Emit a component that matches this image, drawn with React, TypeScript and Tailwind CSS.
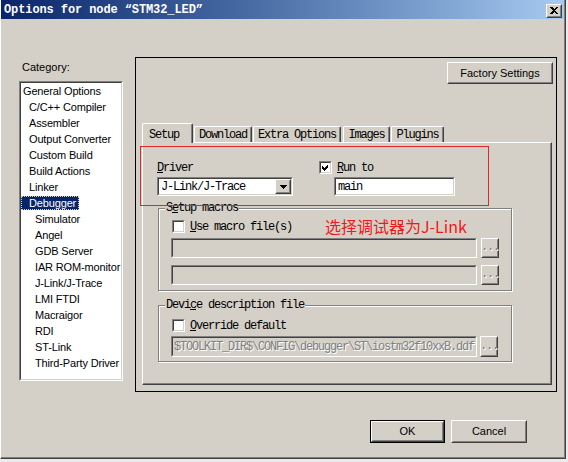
import React from "react";

const mono = "font-['Liberation_Mono','Courier_New',monospace] text-[12px] tracking-[-1.2px]";
const sans = "font-['Liberation_Sans',Arial,sans-serif] text-[11px]";

const categories: [string, number][] = [
  ["General Options", 0],
  ["C/C++ Compiler", 1],
  ["Assembler", 1],
  ["Output Converter", 1],
  ["Custom Build", 1],
  ["Build Actions", 1],
  ["Linker", 1],
  ["Debugger", 1],
  ["Simulator", 2],
  ["Angel", 2],
  ["GDB Server", 2],
  ["IAR ROM-monitor", 2],
  ["J-Link/J-Trace", 2],
  ["LMI FTDI", 2],
  ["Macraigor", 2],
  ["RDI", 2],
  ["ST-Link", 2],
  ["Third-Party Driver", 2],
];

const tabs = [
  { name: "Download", cls: "ml-[1px] w-[58px]" },
  { name: "Extra Options", cls: "ml-[1px] w-[88px]" },
  { name: "Images", cls: "ml-[2px] w-[47px]" },
  { name: "Plugins", cls: "ml-[1px] w-[53px]" },
];

type Box = { className?: string; inner?: string; children?: React.ReactNode };

function Raised({ className = "", inner = "", children }: Box) {
  return (
    <div className={`border border-t-white border-l-white border-r-[#404040] border-b-[#404040] bg-[#d4d0c8] ${className}`}>
      <div className={`flex h-full w-full items-center justify-center border border-t-[#d4d0c8] border-l-[#d4d0c8] border-r-[#808080] border-b-[#808080] ${inner}`}>
        {children}
      </div>
    </div>
  );
}

function Sunken({ className = "", inner = "bg-white", children }: Box) {
  return (
    <div className={`border border-t-[#808080] border-l-[#808080] border-r-white border-b-white ${className}`}>
      <div className={`flex h-full w-full items-center border border-t-[#404040] border-l-[#404040] border-r-[#d4d0c8] border-b-[#d4d0c8] ${inner}`}>
        {children}
      </div>
    </div>
  );
}

function Check({ checked }: { checked?: boolean }) {
  return (
    <Sunken className="h-[13px] w-[13px] shrink-0" inner="bg-white justify-center">
      {checked && (
        <svg width="9" height="9" viewBox="0 0 9 9" shapeRendering="crispEdges">
          <path d="M1 3 L3 5 L7 1 L7 4 L3 8 L1 6 Z" fill="#000" />
        </svg>
      )}
    </Sunken>
  );
}

function Browse({ className = "" }: { className?: string }) {
  return (
    <Raised className={`h-[20px] w-[18px] ${className}`}>
      <span className={`${mono} -mt-[2px] text-[#808080] [text-shadow:1px_1px_0_#fff]`}>...</span>
    </Raised>
  );
}

export default function App() {
  return (
    <div className="h-[462px] w-[568px] bg-[#ececec]">
      <div className="h-[459px] w-[566px] border-l border-r border-b border-l-white border-r-[#404040] border-b-[#404040] bg-[#d4d0c8] shadow-[inset_-1px_-1px_0_#808080]">
        {/* Title bar */}
        <div className="flex h-[19px] w-[563px] items-center justify-between bg-gradient-to-r from-[#0a246a] to-[#a6caf0] pl-[3px] pr-[2px]">
          <span className="font-['Liberation_Mono',monospace] text-[12px] font-bold tracking-[-0.1px] text-white">
            Options for node “STM32_LED”
          </span>
          <Raised className="mt-[2px] h-[14px] w-[16px]">
            <svg width="8" height="7" viewBox="0 0 8 7" shapeRendering="crispEdges">
              <path d="M0 0h2l2 2 2-2h2L5 3.5 8 7H6L4 5 2 7H0l3-3.5z" fill="#000" />
            </svg>
          </Raised>
        </div>

        <div className="flex">
          {/* Category list */}
          <div className={`ml-[18px] mt-[41px] flex w-[104px] flex-col ${sans}`}>
            <div className="h-[14px] pl-[3px] leading-[14px]">Category:</div>
            <Sunken className="mt-[7px] h-[300px] w-[104px]" inner="bg-white flex-col items-start overflow-hidden tracking-[-0.15px]">
              {categories.map(([name, level]) => {
                const pad = level === 0 ? "pl-[2px]" : level === 1 ? "pl-[8px]" : "pl-[14px]";
                if (name === "Debugger") {
                  return (
                    <div key={name} className="flex h-[16px] shrink-0 items-center whitespace-nowrap">
                      <span className="flex h-[14px] items-center bg-[#0a246a] pl-[8px] pr-[3px] text-white outline-1 outline-dotted outline-[#d8d8a0] -outline-offset-1">
                        {name}
                      </span>
                    </div>
                  );
                }
                return (
                  <div key={name} className={`flex h-[16px] shrink-0 items-center whitespace-nowrap text-black ${pad}`}>
                    {name}
                  </div>
                );
              })}
            </Sunken>
          </div>

          {/* Right side */}
          <div className="ml-[12px] mt-[38px] flex flex-col">
            <div className="flex h-[335px] w-[422px] flex-col border border-black">
              <div className="flex justify-end pr-[3px] pt-[4px]">
                <Raised className={`h-[22px] w-[106px] ${sans}`}>Factory Settings</Raised>
              </div>

              {/* Tabs */}
              <div className={`ml-[6px] mt-[39px] flex h-[19px] items-end ${mono}`}>
                <div className="relative z-10 -mb-[1px] flex h-[20px] w-[51px] items-start rounded-tl-[2px] rounded-tr-[2px] border-t border-l border-r border-t-white border-l-white border-r-[#404040] bg-[#d4d0c8] pl-[6px] pt-[2px] shadow-[inset_-1px_0_0_#808080]">
                  Setup
                </div>
                {tabs.map((t) => (
                  <div
                    key={t.name}
                    className={`flex h-[16px] items-center justify-center rounded-tl-[2px] rounded-tr-[2px] border-t border-l border-r border-t-white border-l-white border-r-[#404040] pt-[1px] shadow-[inset_-1px_0_0_#808080] ${t.cls}`}
                  >
                    {t.name}
                  </div>
                ))}
              </div>

              {/* Tab panel */}
              <div className={`relative ml-[6px] h-[243px] w-[410px] border border-t-white border-l-white border-r-[#404040] border-b-[#404040] pl-[14px] pt-[17px] shadow-[inset_-1px_-1px_0_#808080] ${mono}`}>
                {/* annotation box */}
                <div className="absolute left-[-3px] top-[3px] h-[60px] w-[349px] border border-[#e02828]" />
                <div className="absolute left-[182px] top-[73px] font-['Noto_Sans_CJK_SC',sans-serif] text-[16px] leading-[20px] tracking-normal text-[#f01818]">
                  选择调试器为J-Link
                </div>

                <div className="flex">
                  <div className="flex w-[136px] flex-col">
                    <div className="h-[13px] pt-[2px] leading-[13px]">
                      <span className="underline underline-offset-[1px]">D</span>river
                    </div>
                    <Sunken className="mt-[4px] h-[19px] w-[136px]" inner="bg-white justify-between">
                      <span className="pl-[2px]">J-Link/J-Trace</span>
                      <Raised className="h-[15px] w-[16px]">
                        <svg width="7" height="4" viewBox="0 0 7 4" shapeRendering="crispEdges">
                          <path d="M0 0h7L3.5 4z" fill="#000" />
                        </svg>
                      </Raised>
                    </Sunken>
                  </div>
                  <div className="ml-[26px] flex flex-col">
                    <div className="flex h-[13px] items-start gap-[5px]">
                      <div className="mt-[1px]">
                        <Check checked />
                      </div>
                      <span className="pt-[2px] leading-[13px]">
                        <span className="underline underline-offset-[1px]">R</span>un to
                      </span>
                    </div>
                    <Sunken className="ml-[15px] mt-[4px] h-[19px] w-[121px]" inner="bg-white pl-[2px]">
                      main
                    </Sunken>
                  </div>
                </div>

                {/* Setup macros */}
                <fieldset className="ml-[1px] mt-[6px] h-[89px] w-[354px] border border-[#808080] shadow-[inset_1px_1px_0_#fff,1px_1px_0_#fff]">
                  <legend className="ml-[6px] bg-[#d4d0c8] px-[1px] leading-[12px]">
                    S<span className="underline underline-offset-[1px]">e</span>tup macros
                  </legend>
                  <div className="flex flex-col pl-[12px]">
                    <div className="mt-[6px] flex h-[13px] items-center gap-[5px] pl-[1px]">
                      <Check />
                      <span>
                        <span className="underline underline-offset-[1px]">U</span>se macro file(s)
                      </span>
                    </div>
                    <div className="mt-[5px] flex items-center gap-[4px]">
                      <Sunken className="h-[20px] w-[306px]" inner="bg-[#d4d0c8]" />
                      <Browse />
                    </div>
                    <div className="mt-[7px] flex items-center gap-[4px]">
                      <Sunken className="h-[20px] w-[306px]" inner="bg-[#d4d0c8]" />
                      <Browse />
                    </div>
                  </div>
                </fieldset>

                {/* Device description file */}
                <fieldset className="ml-[1px] mt-[8px] h-[63px] w-[354px] border border-[#808080] shadow-[inset_1px_1px_0_#fff,1px_1px_0_#fff]">
                  <legend className="ml-[6px] bg-[#d4d0c8] px-[1px] leading-[12px]">
                    Devi<span className="underline underline-offset-[1px]">c</span>e description file
                  </legend>
                  <div className="flex flex-col pl-[12px]">
                    <div className="mt-[8px] flex h-[13px] items-center gap-[5px] pl-[1px]">
                      <Check />
                      <span>
                        <span className="underline underline-offset-[1px]">O</span>verride default
                      </span>
                    </div>
                    <div className="mt-[4px] flex items-center gap-[3px]">
                      <Sunken className="h-[21px] w-[306px]" inner="bg-[#d4d0c8] pl-[1px]">
                        <span className="whitespace-nowrap text-[#808080] [text-shadow:1px_1px_0_#fff]">
                          $TOOLKIT_DIR$\CONFIG\debugger\ST\iostm32f10xxB.ddf
                        </span>
                      </Sunken>
                      <Browse className="h-[21px]" />
                    </div>
                  </div>
                </fieldset>
              </div>
            </div>

            {/* Dialog buttons */}
            <div className={`mt-[28px] flex justify-end gap-[6px] pr-[30px] ${sans}`}>
              <div className="h-[23px] w-[75px] border border-black">
                <Raised className="h-full w-full">OK</Raised>
              </div>
              <Raised className="h-[23px] w-[76px]">Cancel</Raised>
            </div>
          </div>
        </div>
      </div>
    </div>
  );
}
